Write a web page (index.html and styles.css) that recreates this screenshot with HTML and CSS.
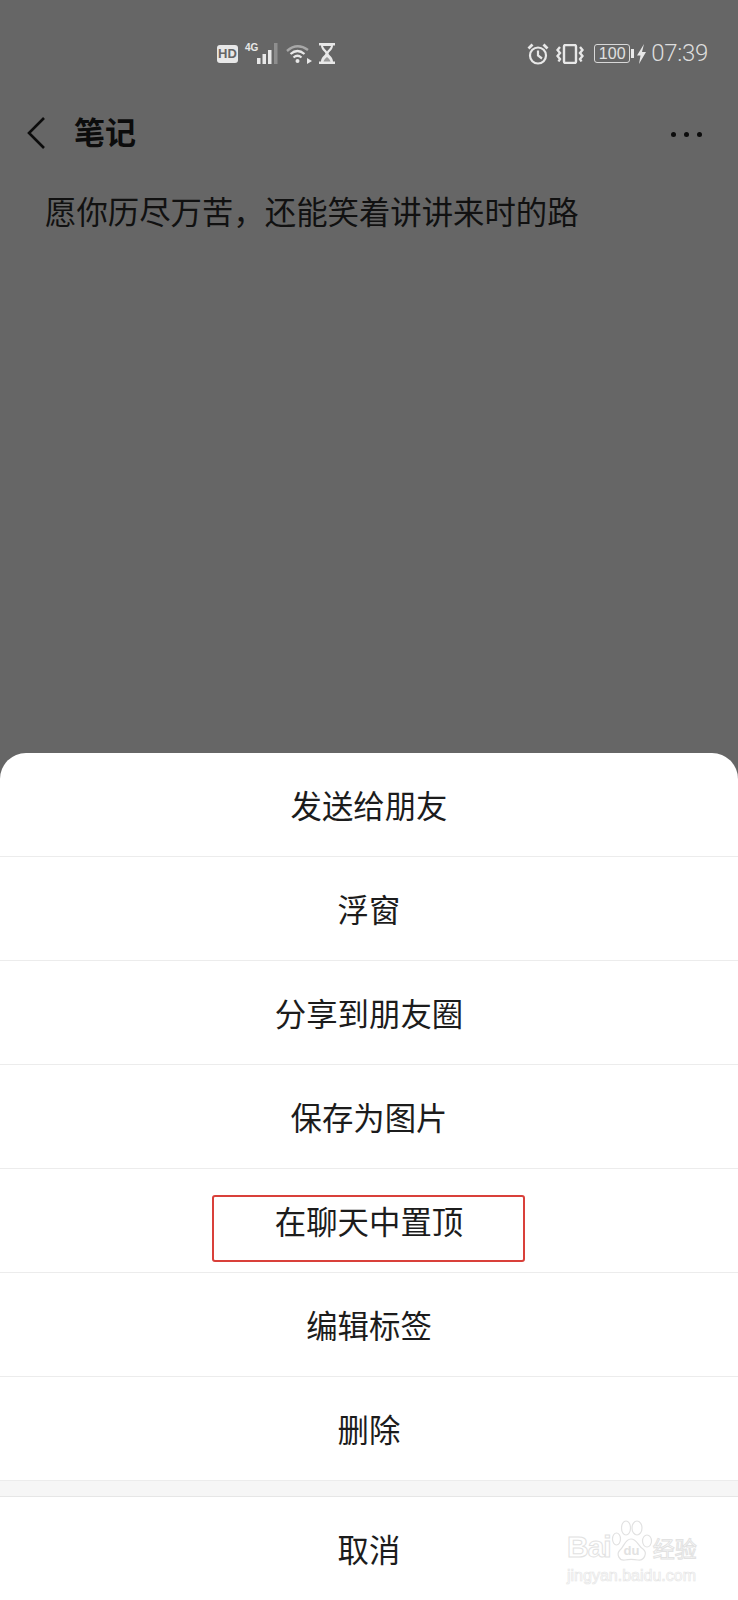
FILE: index.html
```html
<!DOCTYPE html>
<html lang="zh-CN">
<head>
	<meta charset="UTF-8">
	<title>笔记</title>
	<link rel="stylesheet" href="styles.css">
</head>
<body>
	<div class="page">
		<div class="status">
			<div class="status-left">
				<span class="hd">HD</span>
				<div class="signal">
					<span class="net">4G</span>
					<svg width="21" height="21" viewBox="0 0 21 21">
						<rect x="0" y="15" width="3.500" height="6" fill="#e8e8e8"/>
						<rect x="5.500" y="11" width="3.500" height="10" fill="#e8e8e8"/>
						<rect x="11" y="7" width="3.500" height="14" fill="#e8e8e8"/>
						<rect x="17" y="0" width="3.500" height="21" fill="#8e8e8e"/>
					</svg>
				</div>
				<svg class="wifi" width="27" height="21" viewBox="0 0 27 21" fill="none" stroke="#e8e8e8">
					<path d="M1 8 Q11 -1 22 7" stroke-width="2.4" stroke="#a8a8a8"/>
					<path d="M4.500 11 Q11.500 5 18.500 11" stroke-width="2.200"/>
					<path d="M7.500 14.500 Q11.500 11 15.500 14.500" stroke-width="2.200"/>
					<circle cx="11.500" cy="18" r="2" fill="#e8e8e8" stroke="none"/>
					<path d="M21 15 L26 18 L21 21 Z" fill="#e8e8e8" stroke="none"/>
				</svg>
				<svg width="16" height="21" viewBox="0 0 16 21">
					<path d="M0 0 H16 V2.500 H14 C14 7 10 8.500 9.500 10.500 C10 12.500 14 14 14 18.500 H16 V21 H0 V18.500 H2 C2 14 6 12.500 6.500 10.500 C6 8.500 2 7 2 2.500 H0 Z" fill="#e8e8e8"/>
					<path d="M4 3 H12 C11.500 5 9 7 8 8.500 C7 7 4.500 5 4 3 Z" fill="#666"/>
					<path d="M8 14 C9.500 15.500 11 16.500 11.500 18.500 H4.500 C5 16.500 6.500 15.500 8 14 Z" fill="#666" opacity="0.6"/>
				</svg>
			</div>
			<div class="status-right">
				<svg width="22" height="22" viewBox="0 0 22 22" fill="none" stroke="#e8e8e8" stroke-width="2.200">
					<circle cx="11" cy="12.500" r="8"/>
					<path d="M11 7.500 V12.500 L15 15.500"/>
					<path d="M1.500 5.500 L5.500 1.500 M16.500 1.500 L20.500 5.500" stroke-width="2.800"/>
				</svg>
				<svg class="vibrate" width="28" height="20" viewBox="0 0 28 20" fill="none" stroke="#e8e8e8" stroke-width="2.400">
					<rect x="8" y="1" width="12" height="18" rx="1.500"/>
					<path d="M4 3 L1.500 6 L4 9 L1.500 12 L4 15 L2.500 17.500"/>
					<path d="M24 3 L26.500 6 L24 9 L26.500 12 L24 15 L25.500 17.500"/>
				</svg>
				<div class="battery">
					<span class="battery-body">100</span>
					<span class="battery-nub"></span>
				</div>
				<svg class="bolt" width="9" height="20" viewBox="0 0 9 20">
					<path d="M7 0 L0 11.500 H3.500 L2 20 L9 8 H5 Z" fill="#e8e8e8"/>
				</svg>
				<span class="time">07:39</span>
			</div>
		</div>

		<div class="topbar">
			<svg class="back" width="20" height="34" viewBox="0 0 20 34" fill="none" stroke="#0c0c0c" stroke-width="2.600">
				<path d="M18 1 L3 16 L18 31"/>
			</svg>
			<h1 class="title">笔记</h1>
			<div class="dots"><i></i><i></i><i></i></div>
		</div>

		<p class="note">愿你历尽万苦，还能笑着讲讲来时的路</p>

		<div class="sheet">
			<div class="row">发送给朋友</div>
			<div class="row">浮窗</div>
			<div class="row">分享到朋友圈</div>
			<div class="row">保存为图片</div>
			<div class="row row-marked">
				<span>在聊天中置顶</span>
				<div class="red-box"></div>
			</div>
			<div class="row">编辑标签</div>
			<div class="row">删除</div>
			<div class="band"></div>
			<div class="row row-last">取消</div>

			<div class="watermark">
				<div class="wm-top">
					<span class="wm-bai">Bai</span>
					<svg width="42" height="42" viewBox="0 0 42 42" fill="#fff" stroke="#e2e2e2" stroke-width="1.200">
						<ellipse cx="5.500" cy="19" rx="4" ry="6"/>
						<ellipse cx="15" cy="8" rx="4.500" ry="7"/>
						<ellipse cx="26" cy="8" rx="5" ry="7"/>
						<ellipse cx="36" cy="21" rx="4.500" ry="6"/>
						<path d="M20 19 C26 19 27 26 32 29 C37 33 33 41 27 40 C22 39 18 39 14 40 C8 41 5 34 9 30 C13 27 14 19 20 19 Z"/>
						<text x="20.500" y="35" class="wm-du">du</text>
					</svg>
					<span class="wm-cn">经验</span>
				</div>
				<div class="wm-url">jingyan.baidu.com</div>
			</div>
		</div>
	</div>
</body>
</html>
```

FILE: styles.css
```css
body{
	margin: 0;
	font-family: "Noto Sans CJK SC", "Liberation Sans", sans-serif;
}

.page{
	width: 738px;
	height: 1600px;
	background-color: #666;
	display: flex;
	flex-direction: column;
	overflow: hidden;
}

/* status bar */
.status{
	display: flex;
	align-items: center;
	height: 21px;
	padding: 43px 30px 0 217px;
}
.status-left{
	display: flex;
	align-items: center;
}
.status-right{
	display: flex;
	align-items: center;
	margin-left: auto;
}
.hd{
	width: 21px;
	height: 18px;
	background-color: #e8e8e8;
	border-radius: 3px;
	color: #666;
	font: bold 13px/18px "Liberation Sans", sans-serif;
	text-align: center;
	margin-right: 7px;
}
.signal{
	display: flex;
	align-items: flex-end;
	margin-right: 8px;
}
.net{
	width: 12px;
	height: 21px;
	color: #e8e8e8;
	font: bold 10px/10px "Liberation Sans", sans-serif;
}
.wifi{
	margin-right: 6px;
}
.vibrate{
	margin-left: 7px;
}
.battery{
	display: flex;
	align-items: center;
	margin-left: 10px;
}
.battery-body{
	width: 34px;
	height: 17px;
	border: 1px solid #d8d8d8;
	border-radius: 3px;
	color: #e0e0e0;
	font: 16px/17px "Liberation Sans", sans-serif;
	text-align: center;
}
.battery-nub{
	width: 3px;
	height: 9px;
	margin-left: 1px;
	background-color: #e8e8e8;
}
.bolt{
	margin-left: 3px;
}
.time{
	margin-left: 5px;
	color: #dedede;
	font: 24px/21px "Roboto", "Liberation Sans", sans-serif;
	font-weight: 300;
	letter-spacing: -0.3px;
}

/* title bar */
.topbar{
	display: flex;
	align-items: center;
	height: 50px;
	margin-top: 45px;
	padding: 0 36px 0 26px;
}
.title{
	margin: 0 0 6px 28px;
	font-size: 31px;
	font-weight: 700;
	line-height: 44px;
	color: #0c0c0c;
}
.dots{
	display: flex;
	gap: 8px;
	margin-left: auto;
}
.dots i{
	width: 5px;
	height: 5px;
	border-radius: 50%;
	background-color: #0c0c0c;
}

.note{
	margin: 27px 0 0 45px;
	height: 50px;
	font-size: 31.400px;
	line-height: 50px;
	color: #111;
	white-space: nowrap;
}

/* bottom sheet */
.sheet{
	position: relative;
	margin-top: auto;
	height: 847px;
	background-color: #fff;
	border-radius: 26px 26px 0 0;
	display: flex;
	flex-direction: column;
}
.row{
	position: relative;
	height: 103px;
	border-bottom: 1px solid #ececec;
	display: flex;
	align-items: center;
	justify-content: center;
	font-size: 31.400px;
	color: #1c1c1c;
}
.row-last{
	flex: 1;
	border-bottom: 0;
}
.band{
	height: 15px;
	background-color: #f6f6f6;
	border-bottom: 1px solid #e6e6e6;
}

/* the red annotation drawn over the screenshot */
.red-box{
	position: absolute;
	left: 212px;
	top: 26px;
	width: 309px;
	height: 63px;
	border: 2px solid #d9403a;
	border-radius: 3px;
}

.watermark{
	position: absolute;
	left: 567px;
	top: 767px;
	width: 135px;
	color: transparent;
}
.wm-top{
	display: flex;
	align-items: flex-end;
	height: 42px;
	white-space: nowrap;
}
.wm-bai{
	font: bold 30px/30px "Liberation Sans", sans-serif;
	letter-spacing: -1px;
	-webkit-text-stroke: 1px #e2e2e2;
}
.wm-du{
	font: bold 13px "Liberation Sans", sans-serif;
	text-anchor: middle;
	fill: #e2e2e2;
	stroke: none;
}
.wm-cn{
	flex: none;
	font-size: 22px;
	line-height: 30px;
	-webkit-text-stroke: 1px #e2e2e2;
}
.wm-url{
	margin-top: 5px;
	font: 16px/18px "Liberation Sans", sans-serif;
	-webkit-text-stroke: 0.7px #e6e6e6;
	white-space: nowrap;
}
```
